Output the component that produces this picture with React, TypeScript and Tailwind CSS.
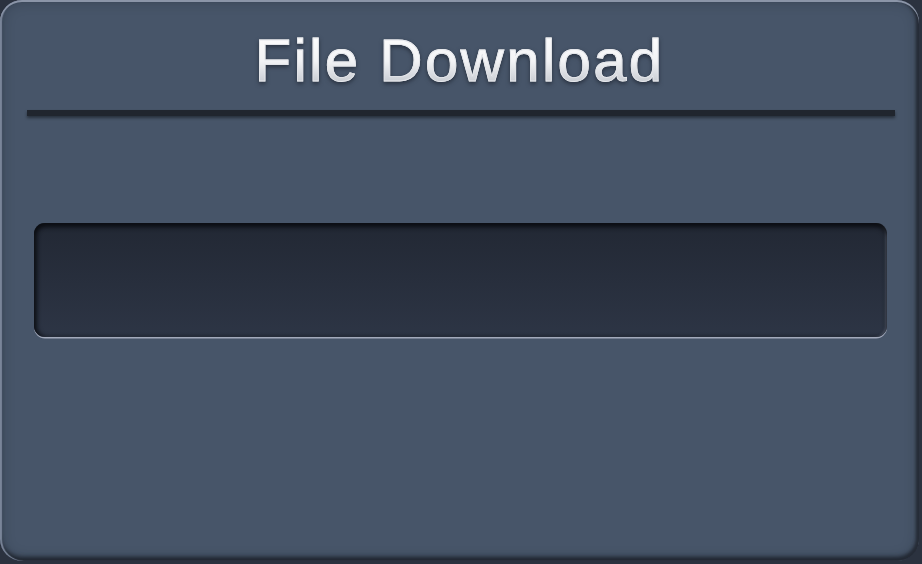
export default function App() {
  return (
    <div className="w-[922px] h-[564px] bg-[#2b323f] overflow-hidden">
      <div className="w-[919px] h-[561px] rounded-[22px] bg-[#475569] flex flex-col shadow-[inset_0_2px_0_#8b95a8,inset_2px_0_1px_#7a8599,inset_-3px_0_3px_#262c37,inset_0_-4px_4px_#1f252f,inset_0_0_14px_rgba(20,25,35,0.35)]">
        <div className="h-[110px] flex items-center justify-center pt-[11px]">
          <span className="font-['Liberation_Sans',Arial,sans-serif] text-[60px] leading-none tracking-[2.3px] bg-gradient-to-b from-[#ffffff] via-[#f2f3f5] to-[#b9bec6] bg-clip-text text-transparent [-webkit-text-stroke:0.8px_#e6e8ec] drop-shadow-[0_2px_2px_rgba(20,25,35,0.6)]">
            File Download
          </span>
        </div>
        <div className="ml-[27px] mr-[24px] h-[6px] bg-[#20252e] shadow-[0_2px_3px_rgba(15,18,24,0.55)]" />
        <div className="h-[107px]" />
        <div className="ml-[34px] mr-[32px] h-[114px] rounded-[11px] bg-gradient-to-b from-[#222834] to-[#2d3545] shadow-[inset_0_4px_5px_#0b0d12,inset_3px_0_4px_rgba(8,10,14,0.7),inset_-2px_0_2px_rgba(160,170,190,0.35),0_1.5px_0_#a3aabb]" />
      </div>
    </div>
  );
}
